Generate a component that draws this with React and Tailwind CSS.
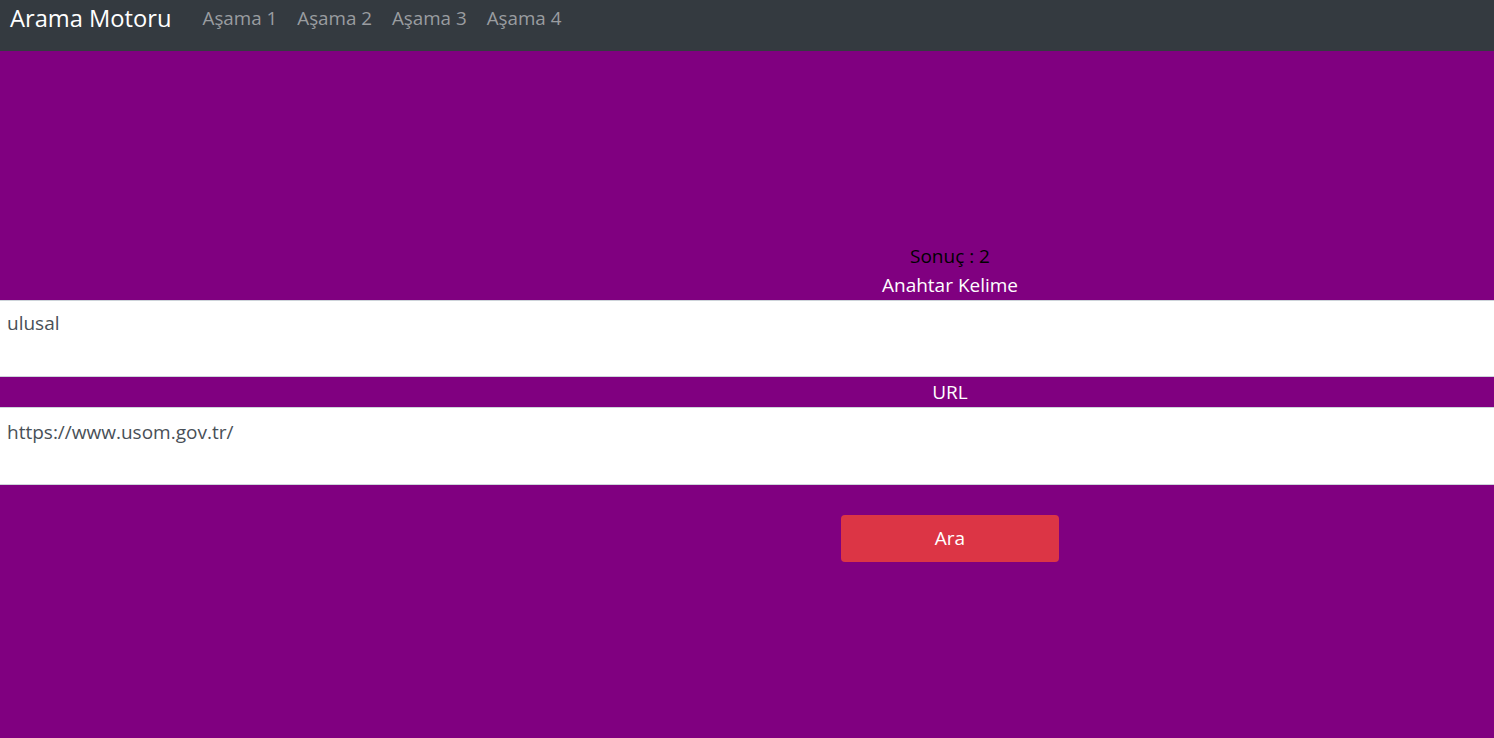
export default function App() {
  const font = { fontFamily: '"Open Sans", "Noto Sans", sans-serif' };
  return (
    <div className="min-h-[738px] bg-[#800080] flex flex-col" style={font}>
      <nav className="h-[51px] bg-[#343a40] flex items-center px-[10px] shrink-0">
        <span className="text-white text-[23.7px] mr-[31px] -mt-[14px]">Arama Motoru</span>
        <div className="flex gap-[20px] -mt-[14px]">
          {["Aşama 1", "Aşama 2", "Aşama 3", "Aşama 4"].map((t) => (
            <span key={t} className="text-[#9a9da0] text-[18.8px]">{t}</span>
          ))}
        </div>
      </nav>
      <div className="h-[190px]" />
      <div className="pl-[406px] text-center text-[19px] leading-[30px] text-black">Sonuç : 2</div>
      <div className="pl-[406px] text-center text-[19px] leading-[29px] text-white">Anahtar Kelime</div>
      <textarea
        className="block w-full h-[77px] bg-white border-y border-[#ced4da] px-[7px] pt-[7px] text-[19px] leading-[30px] text-[#495057] resize-none outline-none"
        defaultValue="ulusal"
      />
      <div className="pl-[406px] text-center text-[19px] leading-[30px] text-white">URL</div>
      <textarea
        className="block w-full h-[78px] bg-white border-y border-[#ced4da] px-[7px] pt-[9px] text-[19px] leading-[30px] text-[#495057] resize-none outline-none"
        defaultValue="https://www.usom.gov.tr/"
      />
      <div className="pl-[406px] flex justify-center pt-[30px]">
        <button className="w-[218px] h-[47px] bg-[#dc3545] rounded-[4px] text-white text-[19px]">Ara</button>
      </div>
    </div>
  );
}
